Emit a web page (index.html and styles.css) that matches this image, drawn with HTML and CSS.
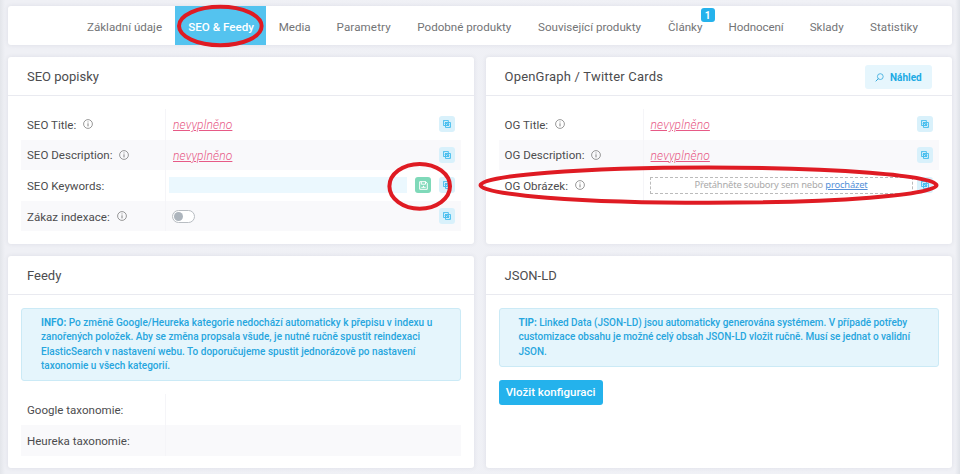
FILE: index.html
```
<!DOCTYPE html>
<html lang="cs">
<head>
<meta charset="utf-8">
<title>SEO &amp; Feedy</title>
<link rel="stylesheet" href="styles.css">
</head>
<body>
<svg class="sprite" width="0" height="0">
  <symbol id="info" viewBox="0 0 10 10"><circle cx="5" cy="5" r="4.4" fill="none" stroke="#777" stroke-width=".75"/><path d="M5 4.3V7.4M5 2.5V3.4" stroke="#777" stroke-width=".9"/></symbol>
  <symbol id="copy" viewBox="0 0 9 9"><path d="M.5.5H6V2.8H8.4V8.4H2.8V6.2H.5ZM2.8 6.2V2.8H6M6 2.8V6.2H2.8M2 2L7 7M2 4L4 6M4.5 3L7 5.5" fill="none" stroke="#38b8ec" stroke-width=".95"/></symbol>
  <symbol id="save" viewBox="0 0 9 9"><path d="M.7.7H6.8L8.3 2.2V8.3H.7ZM2.3.7V3.2H6.5V.7M2.3 6.3H6.7M4.5 4.8V6.3" fill="none" stroke="#fff" stroke-width="1"/></symbol>
  <symbol id="search" viewBox="0 0 9 9"><path d="M3.5 5.5L.7 8.3" stroke="#35a9dd" stroke-width="1"/><circle cx="5.3" cy="3.6" r="2.9" fill="none" stroke="#35a9dd" stroke-width=".8"/></symbol>
</svg>
<nav class="tabs">
  <a class="t1"><span>Základní údaje</span></a>
  <a class="t2 active"><span>SEO &amp; Feedy</span></a>
  <a class="t3"><span>Media</span></a>
  <a class="t4"><span>Parametry</span></a>
  <a class="t5"><span>Podobné produkty</span></a>
  <a class="t6"><span>Související produkty</span></a>
  <a class="t7"><span>Články</span><b class="badge">1</b></a>
  <a class="t8"><span>Hodnocení</span></a>
  <a class="t9"><span>Sklady</span></a>
  <a class="t10"><span>Statistiky</span></a>
</nav>
<main class="grid">
  <section class="card">
    <header><h2>SEO popisky</h2></header>
    <div class="rows">
      <div class="row"><div class="label"><span>SEO Title:</span><svg class="info"><use href="#info"/></svg></div><div class="value"><a class="empty">nevyplněno</a><i class="copy"><svg><use href="#copy"/></svg></i></div></div>
      <div class="row"><div class="label"><span>SEO Description:</span><svg class="info"><use href="#info"/></svg></div><div class="value"><a class="empty">nevyplněno</a><i class="copy"><svg><use href="#copy"/></svg></i></div></div>
      <div class="row"><div class="label"><span>SEO Keywords:</span></div><div class="value edit"><div class="field"></div><i class="copy save"><svg><use href="#save"/></svg></i><i class="copy"><svg><use href="#copy"/></svg></i></div></div>
      <div class="row"><div class="label"><span>Zákaz indexace:</span><svg class="info"><use href="#info"/></svg></div><div class="value"><div class="switch"></div><i class="copy"><svg><use href="#copy"/></svg></i></div></div>
    </div>
  </section>
  <section class="card">
    <header><h2 class="wide">OpenGraph / Twitter Cards</h2><button class="preview"><svg><use href="#search"/></svg><span>Náhled</span></button></header>
    <div class="rows">
      <div class="row"><div class="label"><span>OG Title:</span><svg class="info"><use href="#info"/></svg></div><div class="value"><a class="empty">nevyplněno</a><i class="copy"><svg><use href="#copy"/></svg></i></div></div>
      <div class="row"><div class="label"><span>OG Description:</span><svg class="info"><use href="#info"/></svg></div><div class="value"><a class="empty">nevyplněno</a><i class="copy"><svg><use href="#copy"/></svg></i></div></div>
      <div class="row"><div class="label"><span>OG Obrázek:</span><svg class="info"><use href="#info"/></svg></div><div class="value edit"><div class="drop"><span>Přetáhněte soubory sem nebo <a>procházet</a></span></div><i class="copy"><svg><use href="#copy"/></svg></i></div></div>
    </div>
  </section>
  <section class="card">
    <header><h2>Feedy</h2></header>
    <div class="alert"><span><b>INFO:</b> Po změně Google/Heureka kategorie nedochází automaticky k přepisu v indexu u</span><br><span>zanořených položek. Aby se změna propsala všude, je nutné ručně spustit reindexaci</span><br><span>ElasticSearch v nastavení webu. To doporučujeme spustit jednorázově po nastavení</span><br><span>taxonomie u všech kategorií.</span></div>
    <div class="rows">
      <div class="row"><div class="label"><span>Google taxonomie:</span></div><div class="value"></div></div>
      <div class="row"><div class="label"><span>Heureka taxonomie:</span></div><div class="value"></div></div>
    </div>
  </section>
  <section class="card">
    <header><h2>JSON-LD</h2></header>
    <div class="alert tip"><span><b>TIP:</b> Linked Data (JSON-LD) jsou automaticky generována systémem. V případě potřeby</span><br><span>customizace obsahu je možné celý obsah JSON-LD vložit ručně. Musí se jednat o validní</span><br><span>JSON.</span></div>
    <button class="primary"><span>Vložit konfiguraci</span></button>
  </section>
</main>
<svg class="marks" viewBox="0 0 960 474">
  <ellipse cx="220.3" cy="26" rx="41.3" ry="19.2"/>
  <ellipse cx="419.7" cy="186.3" rx="30.3" ry="22.4"/>
  <ellipse cx="708.5" cy="185.2" rx="228" ry="17.6"/>
</svg>
</body>
</html>
```
FILE: styles.css
```
* { box-sizing: border-box; }
body {
  margin: 0;
  width: 960px;
  height: 474px;
  overflow: hidden;
  padding: 6px 8px 0;
  background: linear-gradient(90deg, #e3e5ea 0, #eff0f5 5px, #f0f1f6 955px, #dfe2e8 960px);
  font-family: Roboto, "Noto Sans", sans-serif;
  font-size: 11.55px;
  color: #4c4c4e;
}
.sprite { display: none; }
span, h2, .empty { white-space: nowrap; }
.tabs, .card { background: #fff; border-radius: 3px; box-shadow: 0 0 4px rgba(60, 65, 100, .1); }
.tabs { display: flex; height: 39px; padding: 0 19px 0 0; justify-content: flex-end; font-size: 11.6px; }
.tabs a { position: relative; display: flex; align-items: center; padding: 3px 0 0 13px; color: #737476; }
.tabs a.active { background: #54c3ef; color: #fff; font-weight: 500; }
.tabs .t1 { width: 101.3px; }
.tabs .t2 { width: 90.5px; }
.tabs .t3 { width: 57.8px; }
.tabs .t4 { width: 80.8px; letter-spacing: .12px; }
.tabs .t5 { width: 120.7px; }
.tabs .t6 { width: 130px; }
.tabs .t7 { width: 60.5px; }
.tabs .t8 { width: 81.2px; letter-spacing: -.1px; }
.tabs .t9 { width: 60.3px; }
.tabs .t10 { width: 76px; letter-spacing: .05px; }
.badge {
  position: absolute;
  top: 2px;
  right: 1px;
  width: 14px;
  height: 14px;
  border-radius: 3px;
  background: #25b2ec;
  color: #fff;
  font-size: 10px;
  line-height: 15px;
  text-align: center;
}
.grid {
  display: grid;
  grid-template-columns: 465.5px 466.5px;
  grid-template-rows: 187px 211.5px;
  gap: 12px;
  margin-top: 12px;
}
.card header {
  display: flex;
  align-items: center;
  justify-content: space-between;
  height: 39px;
  padding: 1px 20px 0 19px;
  border-bottom: 1px solid #e9eaf0;
}
h2 { margin: 0; font-size: 13px; font-weight: 400; }
h2.wide { letter-spacing: .2px; }
.rows { margin: 13px 13px 0; }
.row { display: flex; height: 30.6px; }
.row:nth-child(even) { background: #f9f9fb; }
.label { display: flex; align-items: center; width: 145px; padding: 1px 0 0 6px; border-right: 1px solid #f5f5f8; }
.info { width: 10px; height: 10px; margin: -1px 0 0 7px; }
.value { flex: 1; display: flex; align-items: center; padding: 0 6px; }
.value.edit { padding-left: 3px; }
.empty { margin: 2px 0 0 1px; color: #e75a86; font-size: 12px; font-style: italic; font-weight: 300; letter-spacing: .15px; text-decoration: underline; text-underline-offset: 1px; }
.copy { display: flex; align-items: center; justify-content: center; width: 16px; height: 16px; margin-left: auto; border-radius: 3px; background: #d9f1fb; }
.copy svg { width: 8px; height: 8px; }
.field { width: 238px; height: 16px; background: #ebf8fe; }
.save { background: #7fd9b9; margin-left: 8px; }
.save svg { width: 9px; height: 9px; }
.switch { width: 23px; height: 13px; border: 1px solid #b8bdc2; border-radius: 7px; background: #fff; padding: 1px; }
.switch::before { content: ""; display: block; width: 9px; height: 9px; border-radius: 50%; background: #adb5bd; }
.drop { display: flex; justify-content: center; width: 263px; height: 17px; margin-left: 3px; border: 1px dashed #bbb; color: #aaa; font: 9.4px/13px "Noto Sans", sans-serif; letter-spacing: -.17px; }
.drop a { color: #5590d8; text-decoration: underline; }
.preview, .primary { border: 0; font-family: inherit; border-radius: 3px; display: flex; align-items: center; }
.preview { width: 67px; height: 24px; padding: 1px 0 0 10px; gap: 6px; background: #e6f6fd; color: #20aae4; font-weight: 700; font-size: 10px; }
.preview svg { width: 9px; height: 9px; }
.alert {
  margin: 13px 13px 0;
  padding: 6.5px 19px;
  border: 1px solid #cbeaf6;
  border-radius: 3px;
  background: #e5f5fc;
  color: #27a6de;
  font-size: 10px;
  font-weight: 500;
  letter-spacing: .02px;
  line-height: 14.6px;
}
.alert.tip { letter-spacing: -.03px; }
.primary { height: 25px; width: 104px; justify-content: center; margin: 13px 0 0 13px; background: #24b2ec; color: #fff; font-size: 11.5px; font-weight: 500; }
.marks { position: absolute; left: 0; top: 0; width: 960px; height: 474px; fill: none; stroke: #df1b23; stroke-width: 4px; pointer-events: none; }
```
